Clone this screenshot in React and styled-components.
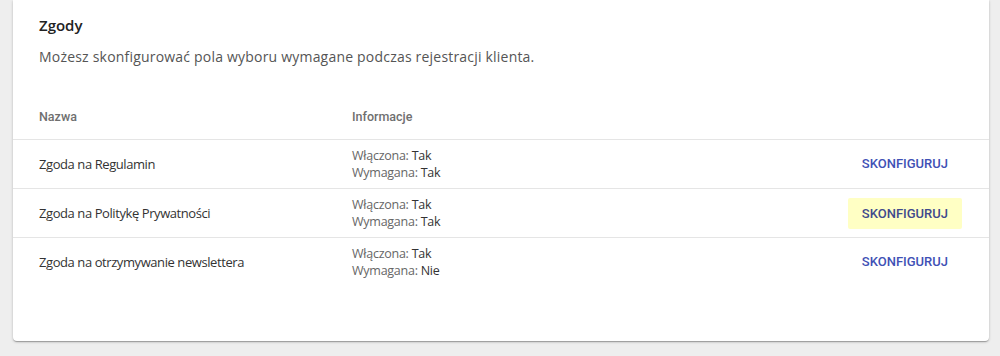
import React from "react"
import styled, { createGlobalStyle } from "styled-components"

const GlobalStyle = createGlobalStyle`
  body {
    margin: 0;
    background: #eeeeee;
    font-family: "Open Sans", "Liberation Sans", sans-serif;
  }
`

const Page = styled.div`
  padding: 0 11px 14px 13px;
`

const Card = styled.section`
  background: #fff;
  box-shadow: 0 1px 3px rgba(0, 0, 0, 0.2), 0 1px 1px rgba(0, 0, 0, 0.14), 0 2px 1px -1px rgba(0, 0, 0, 0.12);
  border-radius: 0 0 4px 4px;
  padding-bottom: 55px;
`

const Intro = styled.div`
  padding: 14px 26px 0;
`

const Title = styled.h2`
  margin: 0;
  font-size: 15px;
  font-weight: 600;
  color: #222;
  line-height: 22px;
`

const Lead = styled.p`
  margin: 10px 0 0;
  font-size: 14px;
  color: #555;
  letter-spacing: 0.2px;
  line-height: 22px;
`

const Table = styled.div`
  margin-top: 25px;
`

const Row = styled.div`
  display: grid;
  grid-template-columns: 313px 1fr auto;
  align-items: center;
  padding: 0 27px 0 26px;
  height: ${p => (p.$head ? "46px" : "48px")};
  border-bottom: ${p => (p.$last ? "none" : "1px solid #e5e5e5")};
`

const HeadCell = styled.div`
  font-family: Roboto, "Liberation Sans", sans-serif;
  font-size: 12.5px;
  font-weight: 500;
  color: #6f6f6f;
`

const Name = styled.div`
  font-size: 13px;
  letter-spacing: -0.42px;
  color: #333;
`

const Info = styled.div`
  font-size: 12.5px;
  line-height: 17px;
  color: #666;
  letter-spacing: -0.25px;

  b {
    font-weight: 400;
    color: #333;
  }
`

const ConfigButton = styled.button`
  font-family: Roboto, "Liberation Sans", sans-serif;
  font-size: 13px;
  font-weight: 500;
  letter-spacing: 0;
  text-transform: uppercase;
  border: none;
  border-radius: 2px;
  padding: 8px 14px;
  height: 31px;
  cursor: pointer;
  color: ${p => (p.$active ? "#3f4a8c" : "#3f51b5")};
  background: ${p => (p.$active ? "#ffffc4" : "transparent")};
  margin-top: ${p => (p.$active ? "0" : "-2px")};
`

const consents = [
  { name: "Zgoda na Regulamin", enabled: "Tak", required: "Tak" },
  { name: "Zgoda na Politykę Prywatności", enabled: "Tak", required: "Tak", active: true },
  { name: "Zgoda na otrzymywanie newslettera", enabled: "Tak", required: "Nie" },
]

export default function App() {
  return (
    <>
      <GlobalStyle />
      <Page>
        <Card>
          <Intro>
            <Title>Zgody</Title>
            <Lead>Możesz skonfigurować pola wyboru wymagane podczas rejestracji klienta.</Lead>
          </Intro>
          <Table>
            <Row $head>
              <HeadCell>Nazwa</HeadCell>
              <HeadCell>Informacje</HeadCell>
              <span />
            </Row>
            {consents.map((c, i) => (
              <Row key={c.name} $last={i === consents.length - 1}>
                <Name>{c.name}</Name>
                <Info>
                  <div>Włączona: <b>{c.enabled}</b></div>
                  <div>Wymagana: <b>{c.required}</b></div>
                </Info>
                <ConfigButton $active={c.active}>Skonfiguruj</ConfigButton>
              </Row>
            ))}
          </Table>
        </Card>
      </Page>
    </>
  )
}
